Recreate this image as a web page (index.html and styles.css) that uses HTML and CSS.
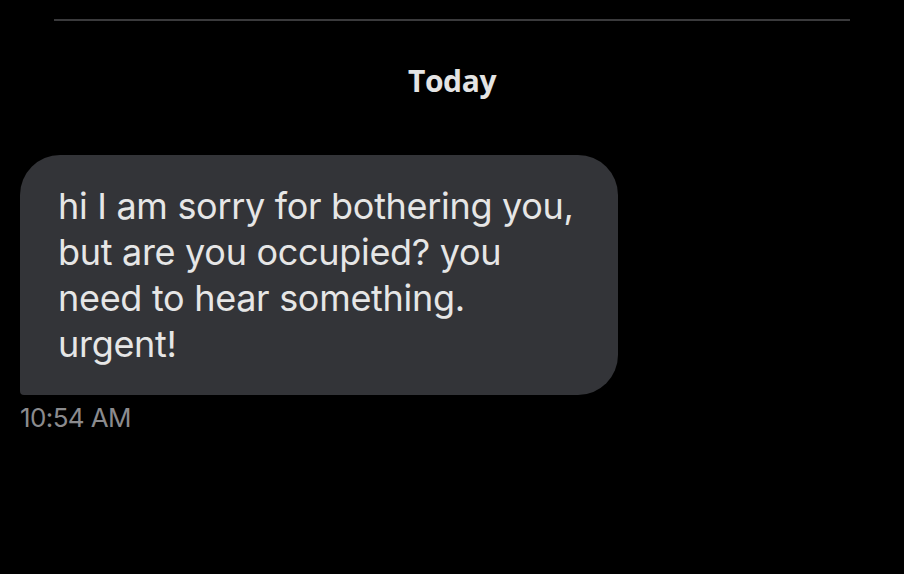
FILE: index.html
```html
<!DOCTYPE html>
<html lang="en">
<head>
    <meta charset="UTF-8">
    <title>Messages</title>
    <link rel="stylesheet" href="styles.css">
</head>
<body>
    <div class="divider"></div>

    <div class="day">Today</div>

    <div class="thread">
        <div class="bubble">hi I am sorry for bothering you, but are you occupied? you need to hear something. urgent!</div>
        <div class="time">10:54 AM</div>
    </div>
</body>
</html>
```

FILE: styles.css
```css
body {
    margin: 0;
    background: #000;
    font-family: Inter, "Open Sans", sans-serif;
    color: #e7e7e7;
    height: 574px;
    overflow: hidden;
}
.divider {
    margin: 19px 54px 0 54px;
    height: 2px;
    background: #3a3a3c;
}
.day {
    margin-top: 40px;
    text-align: center;
    font-family: "Open Sans", sans-serif;
    font-weight: 700;
    font-size: 30px;
    line-height: 40px;
    letter-spacing: -0.4px;
    color: #e4e4e4;
}
.thread {
    padding: 0 20px;
    margin-top: 54px;
}
.bubble {
    width: 522px;
    background: #333438;
    border-radius: 40px 40px 40px 4px;
    padding: 28px 38px;
    font-size: 36px;
    line-height: 46px;
    color: #e6e6e6;
    letter-spacing: -0.3px;
}
.time {
    margin-top: 8px;
    font-size: 26px;
    line-height: 30px;
    color: #8b8b8e;
    letter-spacing: -0.6px;
}
```
